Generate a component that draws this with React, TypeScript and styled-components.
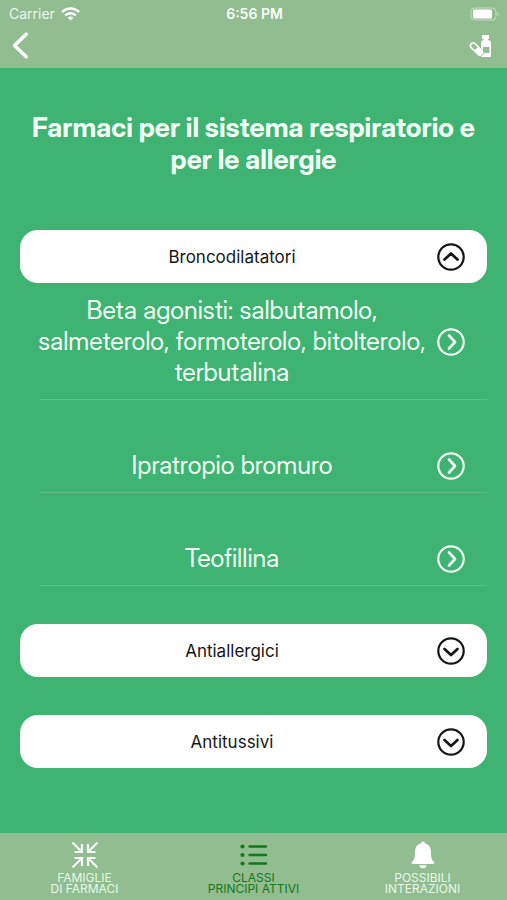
import React, { useState } from "react";
import styled, { createGlobalStyle } from "styled-components";

const colors = {
  page: "#3eb372",
  bar: "#91bd91",
  text: "#f1fff4",
  active: "#14781a",
  divider: "#62bd86",
};

const displayFont = `"Inter Display", Inter, "Liberation Sans", sans-serif`;

const GlobalStyle = createGlobalStyle`
  * { box-sizing: border-box; }
  body {
    margin: 0;
    background: ${colors.page};
    font-family: Inter, "Liberation Sans", sans-serif;
  }
  button { font: inherit; color: inherit; border: 0; padding: 0; background: none; cursor: pointer; }
  svg { display: block; flex: none; }
`;

const Screen = styled.div`
  min-height: 100vh;
  display: flex;
  flex-direction: column;
`;

const Header = styled.header`
  background: ${colors.bar};
  color: #fff;
  padding-bottom: 4px;
`;

const StatusBar = styled.div`
  display: grid;
  grid-template-columns: 1fr auto 1fr;
  align-items: center;
  height: 27px;
  padding: 0 7px 0 9px;
  font-size: 14px;
`;

const Carrier = styled.div`
  display: flex;
  align-items: center;
  gap: 6px;
  color: #ebf8eb;
`;

const Clock = styled.time`
  font-weight: 600;
  color: #f6fff6;
`;

const BatterySlot = styled.div`
  justify-self: end;
`;

const NavBar = styled.nav`
  display: flex;
  align-items: center;
  justify-content: space-between;
  height: 37px;
  padding: 0 14px 0 12px;
`;

const Content = styled.main`
  flex: 1;
  padding: 44px 20px 38px;
`;

const Title = styled.h1`
  margin: 0 0 54px;
  color: ${colors.text};
  font-family: ${displayFont};
  font-size: 27px;
  font-weight: 700;
  line-height: 32px;
  text-align: center;
`;

const Groups = styled.div`
  display: flex;
  flex-direction: column;
  gap: 38px;
`;

const GroupButton = styled.button`
  display: flex;
  align-items: center;
  width: 100%;
  min-height: 53px;
  padding: 0 22px 0 12px;
  border-radius: 18px;
  background: #fff;
  color: #161616;
  font-size: 17px;
`;

const Label = styled.span`
  flex: 1;
  padding-right: 5px;
  text-align: center;
`;

const Items = styled.ul`
  display: flex;
  flex-direction: column;
  gap: 38px;
  margin: 0;
  padding: 0;
  list-style: none;
`;

const Item = styled.li`
  &::after {
    content: "";
    display: block;
    height: 1px;
    margin-left: 20px;
    background: ${colors.divider};
  }
`;

const ItemButton = styled.button`
  display: flex;
  align-items: center;
  width: 100%;
  padding: 12px 22px 11px 12px;
  color: ${colors.text};
  font-family: ${displayFont};
  font-size: 25px;
  line-height: 31px;
`;

const TabBar = styled.nav`
  display: grid;
  grid-template-columns: repeat(3, 1fr);
  min-height: 67px;
  background: ${colors.bar};
`;

const Tab = styled.button<{ $active?: boolean }>`
  display: flex;
  flex-direction: column;
  align-items: center;
  gap: 3px;
  padding-top: 8px;
  color: ${(p) => (p.$active ? colors.active : "#e6fbe6")};
  font-size: 12px;
  line-height: 11px;
  white-space: pre-line;
`;

type Direction = "up" | "down" | "right";

const chevrons: Record<Direction, string> = {
  up: "M7.500 16.500 14 10.500 20.500 16.500",
  down: "M7.500 12 14 18 20.500 12",
  right: "M12 7.500 18 14 12 20.500",
};

const CircleArrow = ({ direction }: { direction: Direction }) => (
  <svg width="28" height="28" viewBox="0 0 28 28" fill="none" stroke="currentColor" aria-hidden="true">
    <circle cx="14" cy="14" r="12.700" strokeWidth="2.200" />
    <path d={chevrons[direction]} strokeWidth="2.700" strokeLinecap="round" strokeLinejoin="round" />
  </svg>
);

const WifiIcon = () => (
  <svg width="19" height="14" viewBox="0 0 19 14" fill="none" stroke="#fff" strokeWidth="2.500" aria-hidden="true">
    <path d="M1 5.200C5.800.4 13.200.4 18 5.200" />
    <path d="M4.200 8.400c3-3 7.600-3 10.600 0" />
    <path d="M9.500 13.600 6.600 10.700c1.700-1.500 4.100-1.500 5.800 0Z" fill="#fff" stroke="none" />
  </svg>
);

const BatteryIcon = () => (
  <svg width="30" height="14" viewBox="0 0 30 14" aria-hidden="true">
    <rect x="1" y="1" width="25" height="12" rx="3.500" fill="none" stroke="#c3e0bf" />
    <rect x="3" y="2.500" width="19" height="9" rx="1.500" fill="#fff" />
    <path d="M27.500 5v4c1.600-.7 1.600-3.300 0-4Z" fill="#c3e0bf" />
  </svg>
);

const BackIcon = () => (
  <svg width="17" height="27" viewBox="0 0 17 27" fill="none" stroke="#fff" strokeWidth="3.600" strokeLinecap="round" strokeLinejoin="round" aria-hidden="true">
    <path d="M14.200 2.200 2.600 13.500l11.600 11.300" />
  </svg>
);

const MedicineIcon = () => (
  <svg width="24" height="24" viewBox="0 0 24 24" aria-hidden="true">
    <path d="M13 1h7v4h-1v1c2 .4 3 1.500 3 3v14H12V9c0-1.500 1-2.600 2.500-3V5H13Z" fill="#fff" />
    <path d="M14 13h6.500v6H14Z" fill={colors.bar} />
    <g transform="rotate(45 7.500 15)">
      <rect x="-1.500" y="11" width="18" height="8" rx="4" fill={colors.bar} />
      <rect x="-.7" y="11.500" width="16.400" height="7" rx="3.500" fill="#fff" />
      <path d="M7 13H2.800a2 2 0 0 0 0 4H7Z" fill={colors.bar} />
    </g>
  </svg>
);

const CompressIcon = () => (
  <svg width="28" height="28" viewBox="0 0 28 28" fill="none" stroke="#f8fff8" strokeWidth="2.200" aria-hidden="true">
    <path d="M1.500 1.500 10.800 10.800M3.500 11H11V3M26.500 1.500 17.200 10.800M24.500 11H17V3M1.500 26.500 10.800 17.200M3.500 17H11v8M26.500 26.500 17.200 17.200M24.500 17H17v8" />
  </svg>
);

const ListIcon = () => (
  <svg width="28" height="28" viewBox="0 0 28 28" fill="currentColor" aria-hidden="true">
    <circle cx="2.500" cy="5.500" r="2.100" />
    <circle cx="2.500" cy="14" r="2.100" />
    <circle cx="2.500" cy="22.500" r="2.100" />
    <path d="M9.500 5.500h16.500M9.500 14h16.500M9.500 22.500h16.500" stroke="currentColor" strokeWidth="2.400" strokeLinecap="round" />
  </svg>
);

const BellIcon = () => (
  <svg width="28" height="28" viewBox="0 0 28 28" fill="#fff" aria-hidden="true">
    <path d="M14 .5c-1.200 0-2 .8-2.200 1.900C7.800 3.400 6 6.800 6 11c0 5.500-.5 7.500-3 9.800-.8 1-.3 2.200.9 2.200h20.200c1.200 0 1.700-1.200.9-2.200-2.500-2.300-3-4.300-3-9.800 0-4.200-1.800-7.600-5.800-8.600C16 1.300 15.200.5 14 .5ZM10.500 24.300a3.500 3 0 0 0 7 0Z" />
  </svg>
);

const groups = [
  {
    name: "Broncodilatatori",
    items: [
      "Beta agonisti: salbutamolo, salmeterolo, formoterolo, bitolterolo, terbutalina",
      "Ipratropio bromuro",
      "Teofillina",
    ],
  },
  { name: "Antiallergici", items: [] },
  { name: "Antitussivi", items: [] },
];

const tabs = [
  { label: "FAMIGLIE\nDI FARMACI", Icon: CompressIcon },
  { label: "CLASSI\nPRINCIPI ATTIVI", Icon: ListIcon },
  { label: "POSSIBILI\nINTERAZIONI", Icon: BellIcon },
];

export default function App() {
  const [open, setOpen] = useState<string | null>("Broncodilatatori");
  const [activeTab, setActiveTab] = useState(1);

  return (
    <Screen>
      <GlobalStyle />
      <Header>
        <StatusBar>
          <Carrier>
            Carrier <WifiIcon />
          </Carrier>
          <Clock>6:56 PM</Clock>
          <BatterySlot>
            <BatteryIcon />
          </BatterySlot>
        </StatusBar>
        <NavBar>
          <button type="button" aria-label="Indietro">
            <BackIcon />
          </button>
          <button type="button" aria-label="Farmaci">
            <MedicineIcon />
          </button>
        </NavBar>
      </Header>
      <Content>
        <Title>Farmaci per il sistema respiratorio e per le allergie</Title>
        <Groups>
          {groups.map(({ name, items }) => (
            <section key={name}>
              <GroupButton
                type="button"
                aria-expanded={open === name}
                onClick={() => setOpen(open === name ? null : name)}
              >
                <Label>{name}</Label>
                <CircleArrow direction={open === name ? "up" : "down"} />
              </GroupButton>
              {open === name && items.length > 0 && (
                <Items>
                  {items.map((item) => (
                    <Item key={item}>
                      <ItemButton type="button">
                        <Label>{item}</Label>
                        <CircleArrow direction="right" />
                      </ItemButton>
                    </Item>
                  ))}
                </Items>
              )}
            </section>
          ))}
        </Groups>
      </Content>
      <TabBar>
        {tabs.map(({ label, Icon }, index) => (
          <Tab
            key={label}
            type="button"
            $active={index === activeTab}
            aria-current={index === activeTab ? "page" : undefined}
            onClick={() => setActiveTab(index)}
          >
            <Icon />
            <span>{label}</span>
          </Tab>
        ))}
      </TabBar>
    </Screen>
  );
}
